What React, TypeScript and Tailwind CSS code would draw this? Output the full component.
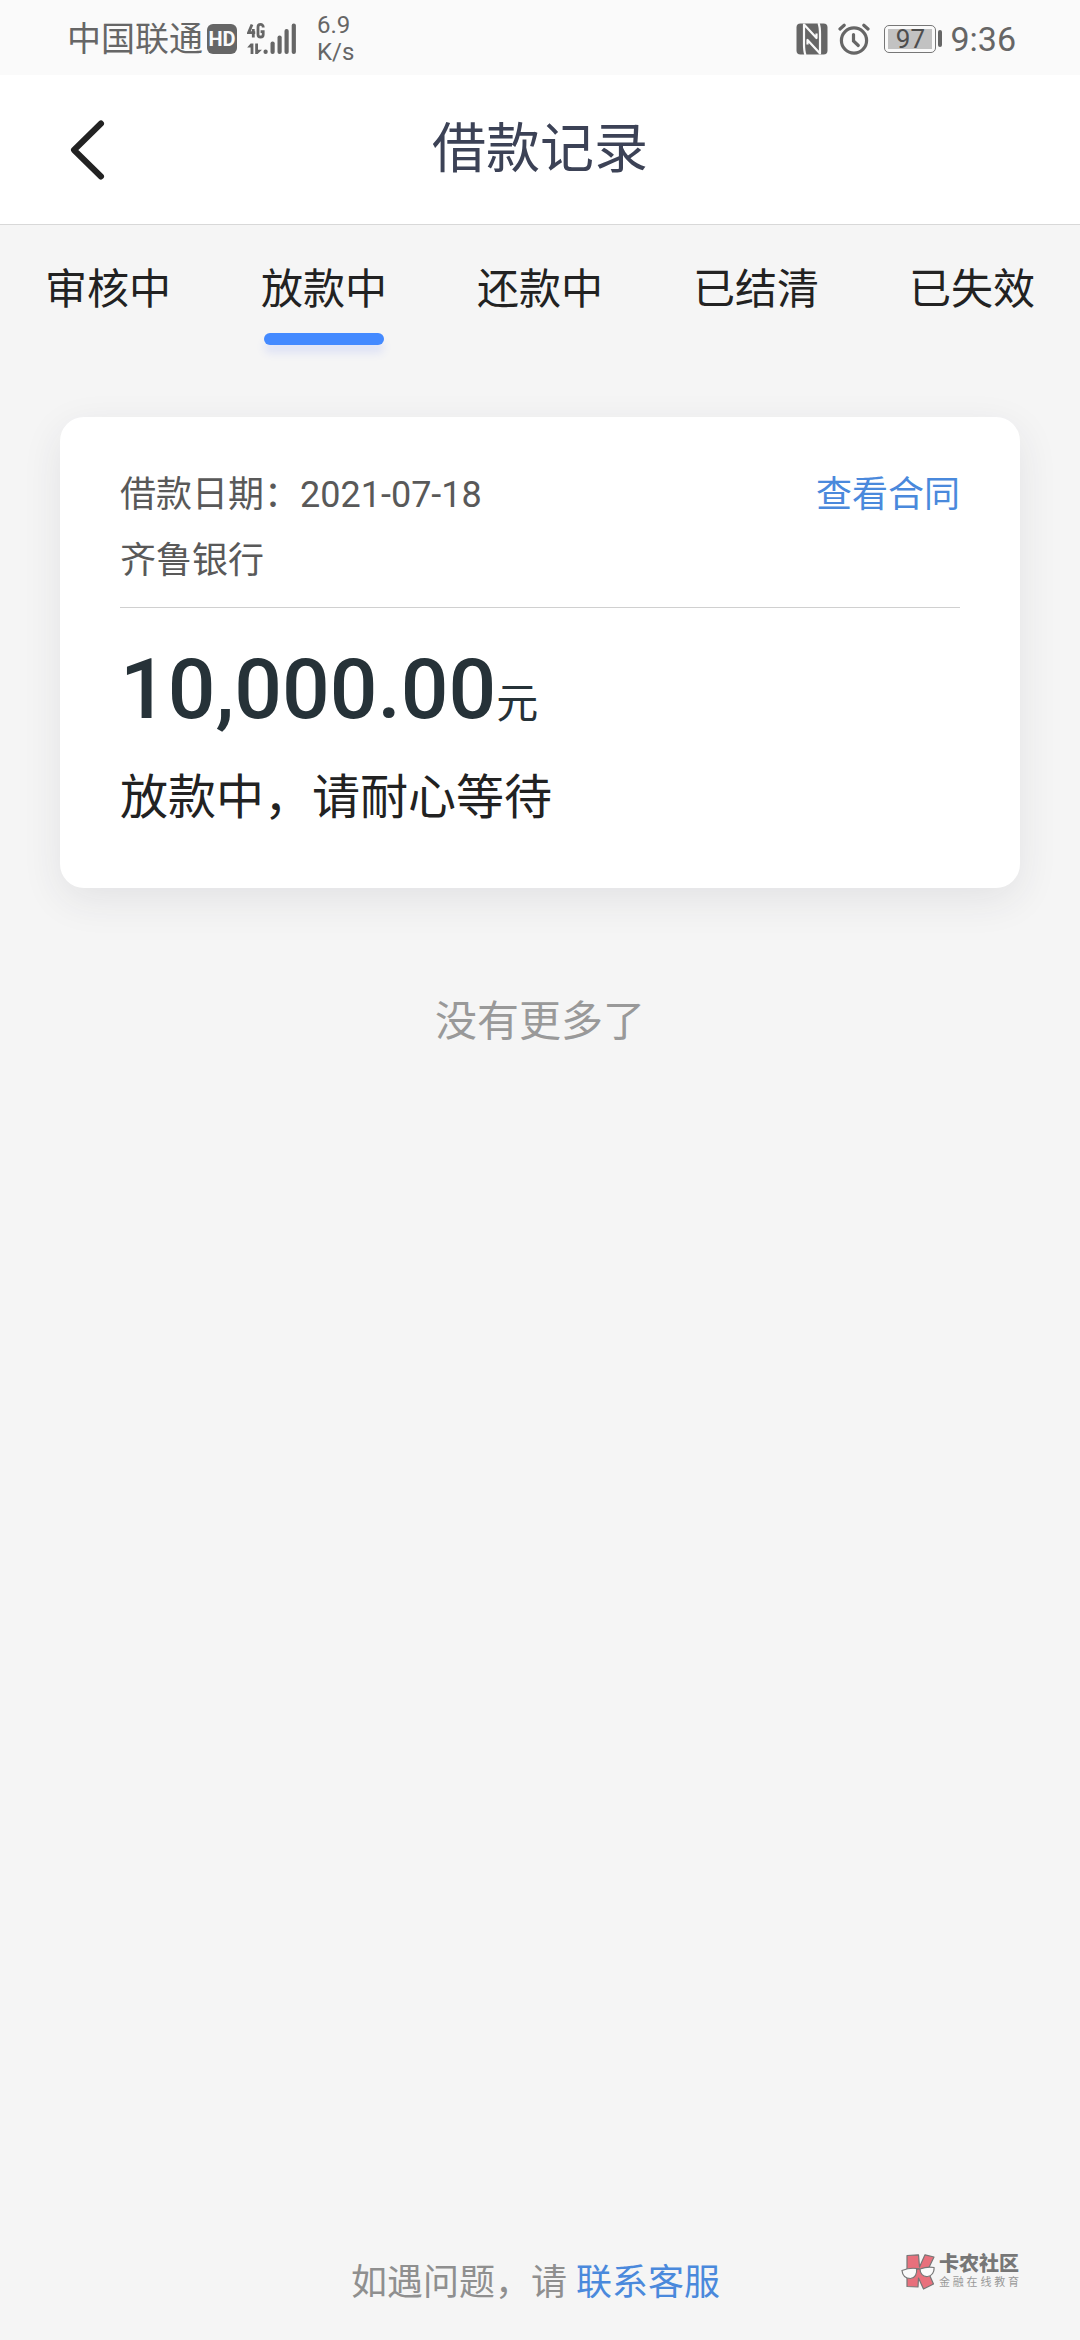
import { useState } from "react";
import clsx from "clsx";

interface LoanRecord {
  id: string;
  date: string;
  bank: string;
  amount: string;
  message: string;
}

const TABS = ["审核中", "放款中", "还款中", "已结清", "已失效"];

const RECORDS: LoanRecord[] = [
  {
    id: "1",
    date: "2021-07-18",
    bank: "齐鲁银行",
    amount: "10,000.00",
    message: "放款中，请耐心等待",
  },
];

function SignalIcon() {
  return (
    <svg className="w-[50px] h-8" viewBox="0 0 50 32" fill="currentColor" aria-hidden="true">
      {/* 4G mark */}
      <g fill="none" stroke="currentColor" strokeWidth="2.8">
        <path d="M5 1.5 1.6 9.6h6.6M6.3 6v8.6" />
        <path d="M16.2 4.6V4a2.6 2.6 0 0 0-5.2 0v7.4a2.6 2.6 0 0 0 5.2 0V8.6h-2.6" />
      </g>
      {/* up / down arrows */}
      <path d="M3.6 20.5h2.8V31H3.6v-6.4H.2zM8.2 20.5H11v6.2h4L10.6 31H8.2z" />
      <rect x="16.5" y="26.5" width="4.2" height="4.5" rx="2" />
      <rect x="23.5" y="18.5" width="4.2" height="12.5" rx="2" />
      <rect x="30.5" y="12.5" width="4.2" height="18.5" rx="2" />
      <rect x="37.5" y="6" width="4.2" height="25" rx="2" />
      <rect x="44.7" y="0.5" width="4.2" height="30.5" rx="2" />
    </svg>
  );
}

function NfcIcon() {
  return (
    <svg className="size-8" viewBox="0 0 32 32" aria-hidden="true">
      <rect x="0.5" y="0.5" width="31" height="31" rx="4" fill="currentColor" />
      <path
        fill="none"
        stroke="#fafafa"
        strokeWidth="2.2"
        strokeLinejoin="round"
        d="M9.5 32C8 28.5 8 26 8 21V1.500L20.500 15V10.500M22.500 0C24 3.500 24 6 24 11V30.500L11.500 17V21.500"
      />
    </svg>
  );
}

function AlarmIcon() {
  return (
    <svg
      className="size-8"
      viewBox="0 0 32 32"
      fill="none"
      stroke="currentColor"
      strokeWidth="3.2"
      strokeLinecap="round"
      aria-hidden="true"
    >
      <circle cx="16" cy="17.5" r="12.6" />
      <path d="M15.5 11.5v6.5l4.8 4.5" />
      <path d="M2 6 6.2 2.2M30 6l-4.2-3.8" />
    </svg>
  );
}

function StatusBar() {
  return (
    <div className="flex h-[75px] items-center justify-between bg-[#fafafa] pt-[2px] pl-[67px] pr-[64px] text-[#666]">
      <div className="flex items-center">
        <span className="text-[34px] leading-[40px]">中国联通</span>
        <span className="ml-1 flex h-[30px] w-[30px] items-center justify-center rounded-md bg-[#666] text-[20px] leading-none font-bold text-[#fafafa]">
          HD
        </span>
        <span className="ml-[10px]">
          <SignalIcon />
        </span>
        <span className="ml-5 flex flex-col text-[24px] leading-[27px]">
          <span>6.9</span>
          <span>K/s</span>
        </span>
      </div>
      <div className="flex items-center">
        <NfcIcon />
        <span className="ml-[10px]">
          <AlarmIcon />
        </span>
        <span className="ml-[14px] flex h-7 w-[52px] rounded-[5px] border border-[#777] p-[3px]">
          <span className="flex flex-1 items-center justify-center bg-[#c2c2c2] text-[26px] leading-none text-[#4d4d4d]">
            97
          </span>
        </span>
        <span className="ml-[2px] h-[17px] w-1 rounded-sm bg-[#666]" />
        <span className="ml-2 text-[34px] leading-[40px]">9:36</span>
      </div>
    </div>
  );
}

function RecordCard({ record }: { record: LoanRecord }) {
  return (
    <article className="rounded-3xl bg-white px-[60px] pt-[45px] pb-[57px] shadow-[0_12px_40px_rgba(40,45,65,0.09)]">
      <div className="border-b border-[#d0d0d0] pb-[13px] text-[36px] leading-[66px] text-[#595959]">
        <div className="flex justify-between">
          <span>借款日期：{record.date}</span>
          <a href="#contract" className="text-[#4a89dc]">
            查看合同
          </a>
        </div>
        <p>{record.bank}</p>
      </div>
      <p className="mt-10 text-[84px] leading-[84px] font-medium text-[#263238]">
        {record.amount}
        <span className="text-[42px] leading-none font-normal">元</span>
      </p>
      <p className="mt-[33px] text-[48px] leading-[66px] text-[#222]">{record.message}</p>
    </article>
  );
}

function Watermark() {
  return (
    <div className="absolute right-[61px] bottom-[50px] flex items-center gap-1">
      <svg className="h-9 w-[34px]" viewBox="0 0 34 36" aria-hidden="true">
        <path
          d="M6 1.5 17.5.8 18.5 13 24 .8 33 3 26.5 16.5 32.5 30 22.5 35 17.5 24 17 33 6 32.5Z"
          fill="#e8707c"
          stroke="#777"
          strokeWidth="1.2"
          strokeLinejoin="round"
        />
        <g fill="#fafafa" stroke="#777" strokeWidth="1.2">
          <path d="M1 16.5C6 14.5 12 14 15.5 14.5 16.5 20 14 24 9.5 24.5 4.5 24.5 1.5 21.5 1 16.5Z" />
          <path d="M19 15C23 13.5 29 12.8 33 13.5 33.5 18 31 22 26.5 22.5 22 23 19 19.5 19 15Z" />
        </g>
        <path d="M15.5 15.5Q17 14 19 15.5" fill="none" stroke="#777" strokeWidth="1.5" />
      </svg>
      <div className="flex flex-col gap-px">
        <span className="text-[20px] leading-[22px] font-black text-[#777]">卡农社区</span>
        <span className="flex justify-between text-[11px] leading-[14px] text-[#999]">
          {Array.from("金融在线教育").map((char) => (
            <span key={char}>{char}</span>
          ))}
        </span>
      </div>
    </div>
  );
}

export default function App() {
  const [activeTab, setActiveTab] = useState(1);

  return (
    <div
      lang="zh-CN"
      className="relative flex min-h-screen flex-col bg-[#f5f5f5] font-[Roboto,'Noto_Sans_CJK_SC',sans-serif]"
    >
      <StatusBar />

      <header className="grid h-[150px] grid-cols-[1fr_auto_1fr] items-center border-b border-[#d8d8d8] bg-white px-[68px]">
        <button type="button" aria-label="返回" className="justify-self-start">
          <svg
            className="h-[62px] w-10"
            viewBox="0 0 40 62"
            fill="none"
            stroke="#222"
            strokeWidth="6"
            strokeLinecap="round"
            strokeLinejoin="round"
            aria-hidden="true"
          >
            <path d="M33 4.5 6 31l27 26.5" />
          </svg>
        </button>
        <h1 className="text-[54px] leading-[72px] text-[#3c4256]">借款记录</h1>
      </header>

      <nav className="grid grid-cols-5 pt-10">
        {TABS.map((tab, index) => (
          <button
            key={tab}
            type="button"
            onClick={() => setActiveTab(index)}
            className="flex flex-col items-center gap-[18px] text-[42px] leading-[50px] text-[#222]"
          >
            {tab}
            <span
              className={clsx(
                "h-3 w-[120px] rounded-full",
                index === activeTab && "bg-[#448aff] shadow-[0_8px_8px_rgba(68,100,255,0.12)]"
              )}
            />
          </button>
        ))}
      </nav>

      <main className="px-[60px] pt-[72px]">
        {RECORDS.map((record) => (
          <RecordCard key={record.id} record={record} />
        ))}
        <p className="mt-[104px] text-center text-[42px] leading-[60px] text-[#999]">没有更多了</p>
      </main>

      <footer className="mt-auto pr-[9px] pb-[30px] text-center text-[36px] leading-[54px] text-[#8f8f8f]">
        如遇问题，请{" "}
        <a href="#service" className="text-[#4a89dc]">
          联系客服
        </a>
      </footer>

      <Watermark />
    </div>
  );
}
